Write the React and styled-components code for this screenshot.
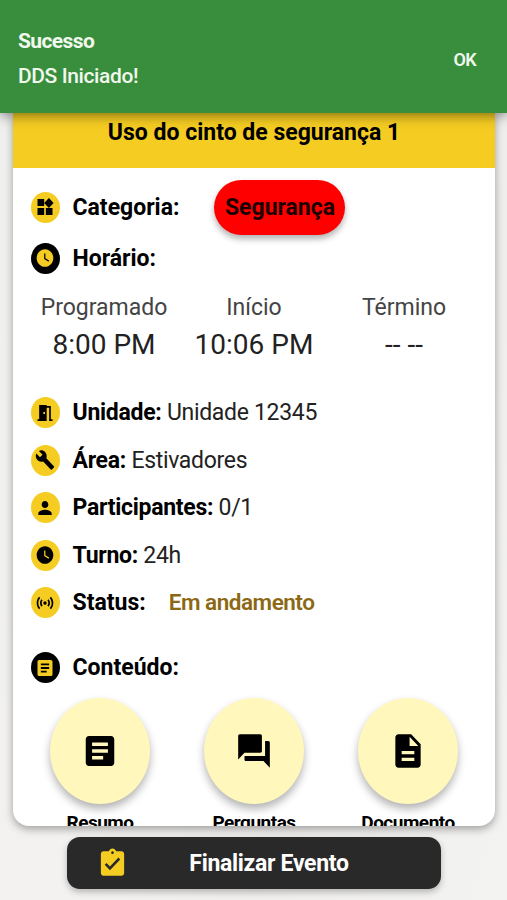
import React from 'react';
import styled, { createGlobalStyle } from 'styled-components';
import {
  MdWidgets,
  MdWatchLater,
  MdMeetingRoom,
  MdBuild,
  MdPerson,
  MdSensors,
  MdArticle,
  MdQuestionAnswer,
  MdDescription,
  MdAssignmentTurnedIn,
} from 'react-icons/md';

const GlobalStyle = createGlobalStyle`
  * {
    box-sizing: border-box;
  }

  body {
    margin: 0;
    font-family: Roboto, "Liberation Sans", sans-serif;
    color: #000;
  }
`;

const Screen = styled.div`
  display: flex;
  flex-direction: column;
  height: 900px;
  overflow: hidden;
  background: linear-gradient(110deg, #efefee 0%, #f3f2f1 45%, #efeeed 70%, #f3f3f2 100%);
`;

const Snackbar = styled.header`
  position: relative;
  z-index: 1;
  display: flex;
  align-items: center;
  justify-content: space-between;
  flex: none;
  height: 113px;
  padding: 5px 31px 0 18px;
  background: #388e3c;
  color: #f1f8ee;
  box-shadow: 0 2px 12px rgba(0, 0, 0, 0.5);
`;

const SnackTitle = styled.p`
  margin: 0;
  font-size: 21px;
  font-weight: 700;
  line-height: 35px;
  letter-spacing: -0.6px;
`;

const SnackMessage = styled.p`
  margin: 0;
  font-size: 21px;
  font-weight: 500;
  line-height: 35px;
  letter-spacing: -0.4px;
`;

const SnackAction = styled.button`
  padding: 0;
  border: none;
  background: none;
  color: inherit;
  font: 600 18px Roboto, sans-serif;
  letter-spacing: -0.7px;
`;

const Card = styled.main`
  flex: none;
  height: 713px;
  margin: 0 12px 0 13px;
  overflow: hidden;
  background: #fff;
  border-radius: 0 0 16px 16px;
  box-shadow: 0 3px 8px rgba(0, 0, 0, 0.35);
`;

const CardTitle = styled.h1`
  height: 55px;
  margin: 0;
  padding-top: 5px;
  background: #f4cc22;
  font-size: 23px;
  font-weight: 700;
  line-height: 30px;
  text-align: center;
`;

const Row = styled.div`
  display: flex;
  align-items: center;
  height: ${props => props.$height || 47.5}px;
  padding: ${props => props.$top || 0}px 0 0 17.5px;
`;

const IconCircle = styled.span`
  display: flex;
  align-items: center;
  justify-content: center;
  width: 29px;
  height: 31px;
  margin-right: 13px;
  border-radius: 50%;
  background: ${props => (props.$dark ? '#000' : '#f4cc22')};
  color: ${props => (props.$dark ? '#f4cc22' : '#000')};
  font-size: 20px;

  svg {
    transform: scaleY(1.06);
  }
`;

const Label = styled.span`
  font-size: 23px;
  font-weight: 700;
  letter-spacing: ${props => (props.$tight ? '-0.28px' : '0')};
  white-space: pre;
`;

const Value = styled.span`
  color: #222;
  font-size: 23px;
  letter-spacing: -0.32px;
  white-space: pre;
`;

const StatusText = styled.span`
  margin-left: 23px;
  color: #8b6914;
  font-size: 22.5px;
  font-weight: 600;
  line-height: 27px;
  letter-spacing: -0.48px;
`;

const Chip = styled.span`
  display: flex;
  align-items: center;
  justify-content: center;
  width: 131px;
  height: 55px;
  margin-left: 35px;
  border-radius: 28px;
  background: #f00;
  color: #1c0000;
  font-size: 23px;
  font-weight: 700;
  box-shadow: 0 4px 6px rgba(0, 0, 0, 0.3);
`;

const Times = styled.div`
  display: grid;
  grid-template-columns: repeat(3, 150px);
  height: 119px;
  padding: 21px 0 0 16px;
  text-align: center;
`;

const TimeLabel = styled.div`
  color: #444;
  font-size: 23px;
  line-height: 34px;
`;

const TimeValue = styled.div`
  color: #222;
  font-size: 28px;
  line-height: 40px;
`;

const Actions = styled.div`
  display: grid;
  grid-template-columns: repeat(3, 154px);
  justify-content: center;
`;

const Action = styled.div`
  display: flex;
  flex-direction: column;
  align-items: center;
`;

const ActionButton = styled.button`
  display: flex;
  align-items: center;
  justify-content: center;
  width: 100px;
  height: 106px;
  padding: 0;
  border: none;
  border-radius: 50%;
  background: #fff7bb;
  color: #000;
  font-size: 38px;
  box-shadow: 0 5px 8px rgba(0, 0, 0, 0.3);

  svg {
    transform: scaleY(1.06);
  }
`;

const ActionLabel = styled.span`
  margin-top: 8px;
  font-size: 19px;
  font-weight: 700;
  line-height: 22px;
  letter-spacing: -0.5px;
`;

const FinishButton = styled.button`
  display: grid;
  grid-template-columns: 90px 1fr 60px;
  align-items: center;
  flex: none;
  width: 374px;
  height: 52px;
  margin: 11px 0 0 67px;
  padding: 0;
  border: none;
  border-radius: 13px;
  background: #292929;
  color: #fff;
  font: 700 23px Roboto, sans-serif;
  letter-spacing: -0.3px;
  box-shadow: 0 3px 6px rgba(0, 0, 0, 0.25);

  svg {
    justify-self: center;
    color: #f4cc22;
    font-size: 31px;
    transform: scaleY(1.05);
  }
`;

const details = [
  { label: 'Unidade: ', value: 'Unidade 12345', icon: MdMeetingRoom },
  { label: 'Área: ', value: 'Estivadores', icon: MdBuild },
  { label: 'Participantes: ', value: '0/1', icon: MdPerson },
  { label: 'Turno: ', value: '24h', icon: MdWatchLater },
];

const times = [
  { label: 'Programado', value: '8:00 PM' },
  { label: 'Início', value: '10:06 PM' },
  { label: 'Término', value: '-- --' },
];

const actions = [
  { label: 'Resumo', icon: MdArticle },
  { label: 'Perguntas', icon: MdQuestionAnswer },
  { label: 'Documento', icon: MdDescription },
];

function App() {
  return (
    <Screen>
      <GlobalStyle />
      <Snackbar>
        <div>
          <SnackTitle>Sucesso</SnackTitle>
          <SnackMessage>DDS Iniciado!</SnackMessage>
        </div>
        <SnackAction>OK</SnackAction>
      </Snackbar>

      <Card>
        <CardTitle>Uso do cinto de segurança 1</CardTitle>

        <Row $height={78}>
          <IconCircle><MdWidgets /></IconCircle>
          <Label>Categoria:</Label>
          <Chip>Segurança</Chip>
        </Row>
        <Row $height={24}>
          <IconCircle $dark><MdWatchLater /></IconCircle>
          <Label>Horário:</Label>
        </Row>

        <Times>
          {times.map(time => (
            <div key={time.label}>
              <TimeLabel>{time.label}</TimeLabel>
              <TimeValue>{time.value}</TimeValue>
            </div>
          ))}
        </Times>

        {details.map(({ label, value, icon: Icon }) => (
          <Row key={label}>
            <IconCircle><Icon /></IconCircle>
            <Label $tight>{label}</Label>
            <Value>{value}</Value>
          </Row>
        ))}
        <Row>
          <IconCircle><MdSensors /></IconCircle>
          <Label>Status:</Label>
          <StatusText>Em andamento</StatusText>
        </Row>
        {/* the content row sits a bit apart from the details above */}
        <Row $height={71} $top={11.5}>
          <IconCircle $dark><MdArticle /></IconCircle>
          <Label>Conteúdo:</Label>
        </Row>

        <Actions>
          {actions.map(({ label, icon: Icon }) => (
            <Action key={label}>
              <ActionButton><Icon /></ActionButton>
              <ActionLabel>{label}</ActionLabel>
            </Action>
          ))}
        </Actions>
      </Card>

      <FinishButton>
        <MdAssignmentTurnedIn />
        <span>Finalizar Evento</span>
      </FinishButton>
    </Screen>
  );
}

export default App;
